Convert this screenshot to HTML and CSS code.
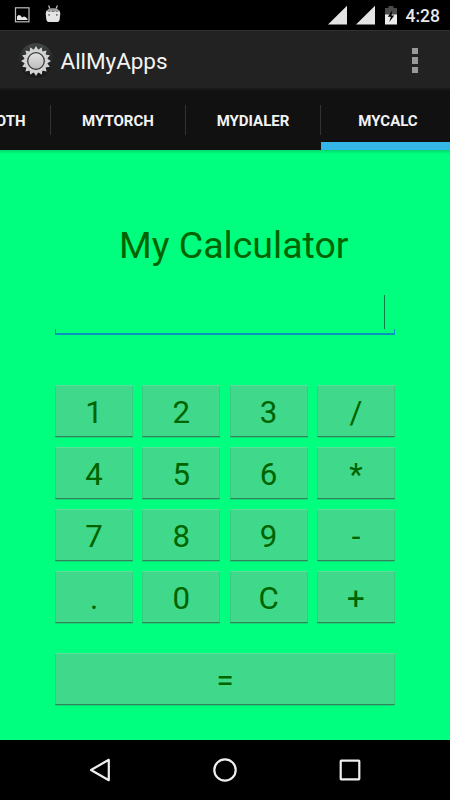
FILE: index.html
```html
<!DOCTYPE html>
<html lang="en">
<head>
  <meta charset="UTF-8">
  <meta name="viewport" content="width=device-width, initial-scale=1">
  <title>AllMyApps</title>
  <link rel="stylesheet" href="styles.css">
</head>
<body>

  <div class="status-bar">
    <div class="notifications">
      <svg width="16" height="16" viewBox="0 0 16 16">
        <rect x="1.500" y=".8" width="13.500" height="14" fill="none" stroke="#bdbdbd" stroke-width="1.200"/>
        <path d="M3 13V9.500l1.500-1.500 2 .5 1.500 2 2-1 1.500.5 2 2v1z" fill="#e8e8e8"/>
      </svg>
      <svg width="16" height="18" viewBox="0 0 16 18">
        <path d="M3.600 .5l1.200 3M12.400 .5l-1.200 3" stroke="#c8c8c8" stroke-width="1.200"/>
        <path d="M2 6Q2.500 3.400 6 3.200h4q3.500 .2 4 2.800z" fill="#9c9c9c"/>
        <path d="M1.500 5.500q2.500 1.500 4.500 .5 2 1 4 0 2 1 4.500-.5l.8 3L14.600 15q-.6 2-2.300 2H3.700q-1.700 0-2.300-2L.7 8.500z" fill="#e4e4e4"/>
        <path d="M3.300 9h1.700v1.700H3.300zM11 9h1.700v1.700H11z" fill="#777"/>
      </svg>
    </div>
    <div class="system">
      <svg width="19" height="20" viewBox="0 0 19 20"><path d="M19 .8V19.500H0z" fill="#e4e4e4"/></svg>
      <svg width="19" height="20" viewBox="0 0 19 20"><path d="M19 .8V19.500H0z" fill="#e4e4e4"/></svg>
      <svg class="battery" width="12" height="19" viewBox="0 0 12 19">
        <path d="M3.500 0h5v2H12v7H0V2h3.500z" fill="#4a4a4a"/>
        <path d="M0 8.500h12v10H0z" fill="#ededed"/>
        <path d="M7.200 4.500L2.800 10.800h3L4.300 16l5-6.500H6.500z" fill="#000"/>
      </svg>
      <span class="clock">4:28</span>
    </div>
  </div>

  <header class="action-bar">
    <svg class="app-icon" width="36" height="38" viewBox="-18 -18 36 38">
      <defs>
        <linearGradient id="disc" x1="0" y1="0" x2="0" y2="1">
          <stop offset="0" stop-color="#444747"/>
          <stop offset=".45" stop-color="#252727"/>
          <stop offset="1" stop-color="#181818"/>
        </linearGradient>
        <linearGradient id="metal" x1="0" y1="0" x2="0" y2="1">
          <stop offset="0" stop-color="#e2e2e2"/>
          <stop offset="1" stop-color="#bdbdbd"/>
        </linearGradient>
        <path id="teeth" d="M-2.400 -11L0 -15 2.400 -11zM-2.400 11L0 15 2.400 11zM-11 -2.400L-15 0 -11 2.400zM11 -2.400L15 0 11 2.400z"/>
      </defs>
      <circle cy="-.5" r="17.300" fill="url(#disc)"/>
      <g fill="#d4d4d4">
        <use href="#teeth"/>
        <use href="#teeth" transform="rotate(22.500)"/>
        <use href="#teeth" transform="rotate(45)"/>
        <use href="#teeth" transform="rotate(67.500)"/>
      </g>
      <circle r="11.500" fill="#d4d4d4"/>
      <circle r="8.300" fill="url(#metal)" stroke="#373a3a" stroke-width="1.300"/>
    </svg>
    <h1>AllMyApps</h1>
    <div class="overflow"><i></i><i></i><i></i></div>
  </header>

  <nav class="tabs">
    <a class="tab">BLUETOOTH</a>
    <a class="tab">MYTORCH</a>
    <a class="tab">MYDIALER</a>
    <a class="tab active">MYCALC</a>
  </nav>

  <main class="calculator">
    <h2>My Calculator</h2>
    <div class="display"><span class="cursor"></span></div>
    <div class="keys">
      <button>1</button>
      <button>2</button>
      <button>3</button>
      <button>/</button>
      <button>4</button>
      <button>5</button>
      <button>6</button>
      <button>*</button>
      <button>7</button>
      <button>8</button>
      <button>9</button>
      <button>-</button>
      <button>.</button>
      <button>0</button>
      <button>C</button>
      <button>+</button>
    </div>
    <button class="equals">=</button>
  </main>

  <footer class="nav-bar">
    <svg width="26" height="26" viewBox="0 0 26 26"><path d="M21.800 2.800V23.200L4 13z"/></svg>
    <svg width="26" height="26" viewBox="0 0 26 26"><circle cx="13" cy="13" r="10.700"/></svg>
    <svg width="26" height="26" viewBox="0 0 26 26"><rect x="3.700" y="3.700" width="18.600" height="18.600" rx=".5"/></svg>
  </footer>

</body>
</html>
```

FILE: styles.css
```css
* {
  box-sizing: border-box;
}

body {
  margin: 0;
  width: 450px;
  height: 800px;
  display: flex;
  flex-direction: column;
  overflow: hidden;
  font-family: Roboto, sans-serif;
  background-color: #000;
}

.status-bar {
  height: 30px;
  display: flex;
  justify-content: space-between;
  padding: 0 10px 0 14px;
  color: #e8e8e8;
}

.notifications {
  display: flex;
  gap: 14.5px;
  padding-top: 5px;
}

.notifications svg:first-child {
  margin-top: 2px;
}

.system {
  display: flex;
  align-items: flex-start;
  gap: 8.5px;
  padding-top: 5px;
}

.battery {
  margin: 0.5px 0 0 2px;
}

.clock {
  font-size: 17.5px;
  font-weight: 500;
  line-height: 22px;
}

.action-bar {
  height: 60px;
  display: flex;
  align-items: center;
  padding: 2px 32px 0 17.5px;
  background-color: #222;
  border-top: 1px solid #303030;
  border-bottom: 2px solid #1a1a1a;
}

.app-icon {
  margin-top: 2px;
}

.action-bar h1 {
  flex: 1;
  margin: 0 0 0 7px;
  font-size: 22.5px;
  font-weight: 400;
  letter-spacing: -0.05px;
  color: #f3f3f3;
}

.overflow {
  display: flex;
  flex-direction: column;
  gap: 3px;
}

.overflow i {
  width: 6px;
  height: 6.5px;
  background-color: #999;
}

.tabs {
  height: 60px;
  display: flex;
  margin-left: -84px;
  background-color: #111;
}

.tab {
  flex: 0 0 135px;
  display: flex;
  align-items: center;
  justify-content: center;
  padding: 2px 1px 0 0;
  font-size: 15px;
  font-weight: 700;
  color: #f3f3f3;
  background: linear-gradient(#333, #333) no-repeat right 15px / 1px 30px;
}

.tab.active {
  background: none;
  border-bottom: 8px solid #33b5e5;
  padding-top: 10px;
}

.calculator {
  flex: 1;
  padding: 0 55px;
  background: linear-gradient(#04d96e, #00ff7f 4px);
  color: #006400;
}

.calculator h2 {
  margin: 0;
  padding: 73px 0 0 64px;
  font-size: 37.5px;
  font-weight: 400;
  line-height: 44px;
}

.display {
  height: 68px;
  display: flex;
  justify-content: flex-end;
  align-items: flex-end;
  padding: 0 10px 4px;
  border-bottom: 2px solid #0a93bd;
  background:
    linear-gradient(#0a93bd, #0a93bd) no-repeat left bottom / 1px 4px,
    linear-gradient(#0a93bd, #0a93bd) no-repeat right bottom / 1px 4px;
}

.cursor {
  width: 1px;
  height: 34px;
  background-color: #087a40;
}

.keys {
  display: grid;
  grid-template-columns: repeat(4, 78px);
  justify-content: space-between;
  row-gap: 10px;
  margin-top: 50px;
}

button {
  height: 52px;
  padding: 3px 0 0;
  border: none;
  border-top: 1px solid #5bdf9b;
  border-bottom: 1px solid #30875c;
  border-radius: 1px;
  box-shadow: inset 1px 0 #3acb82, inset -1px 0 #3acb82, 0 1px #12d873;
  background-color: #40d88a;
  color: #006400;
  font-family: inherit;
  font-size: 31.25px;
}

.equals {
  display: block;
  width: 100%;
  margin-top: 30px;
}

.nav-bar {
  height: 60px;
  display: flex;
  align-items: center;
  justify-content: space-between;
  padding: 0 87px;
}

.nav-bar svg {
  fill: none;
  stroke: #eee;
  stroke-width: 2.2;
  stroke-linejoin: round;
}
```
